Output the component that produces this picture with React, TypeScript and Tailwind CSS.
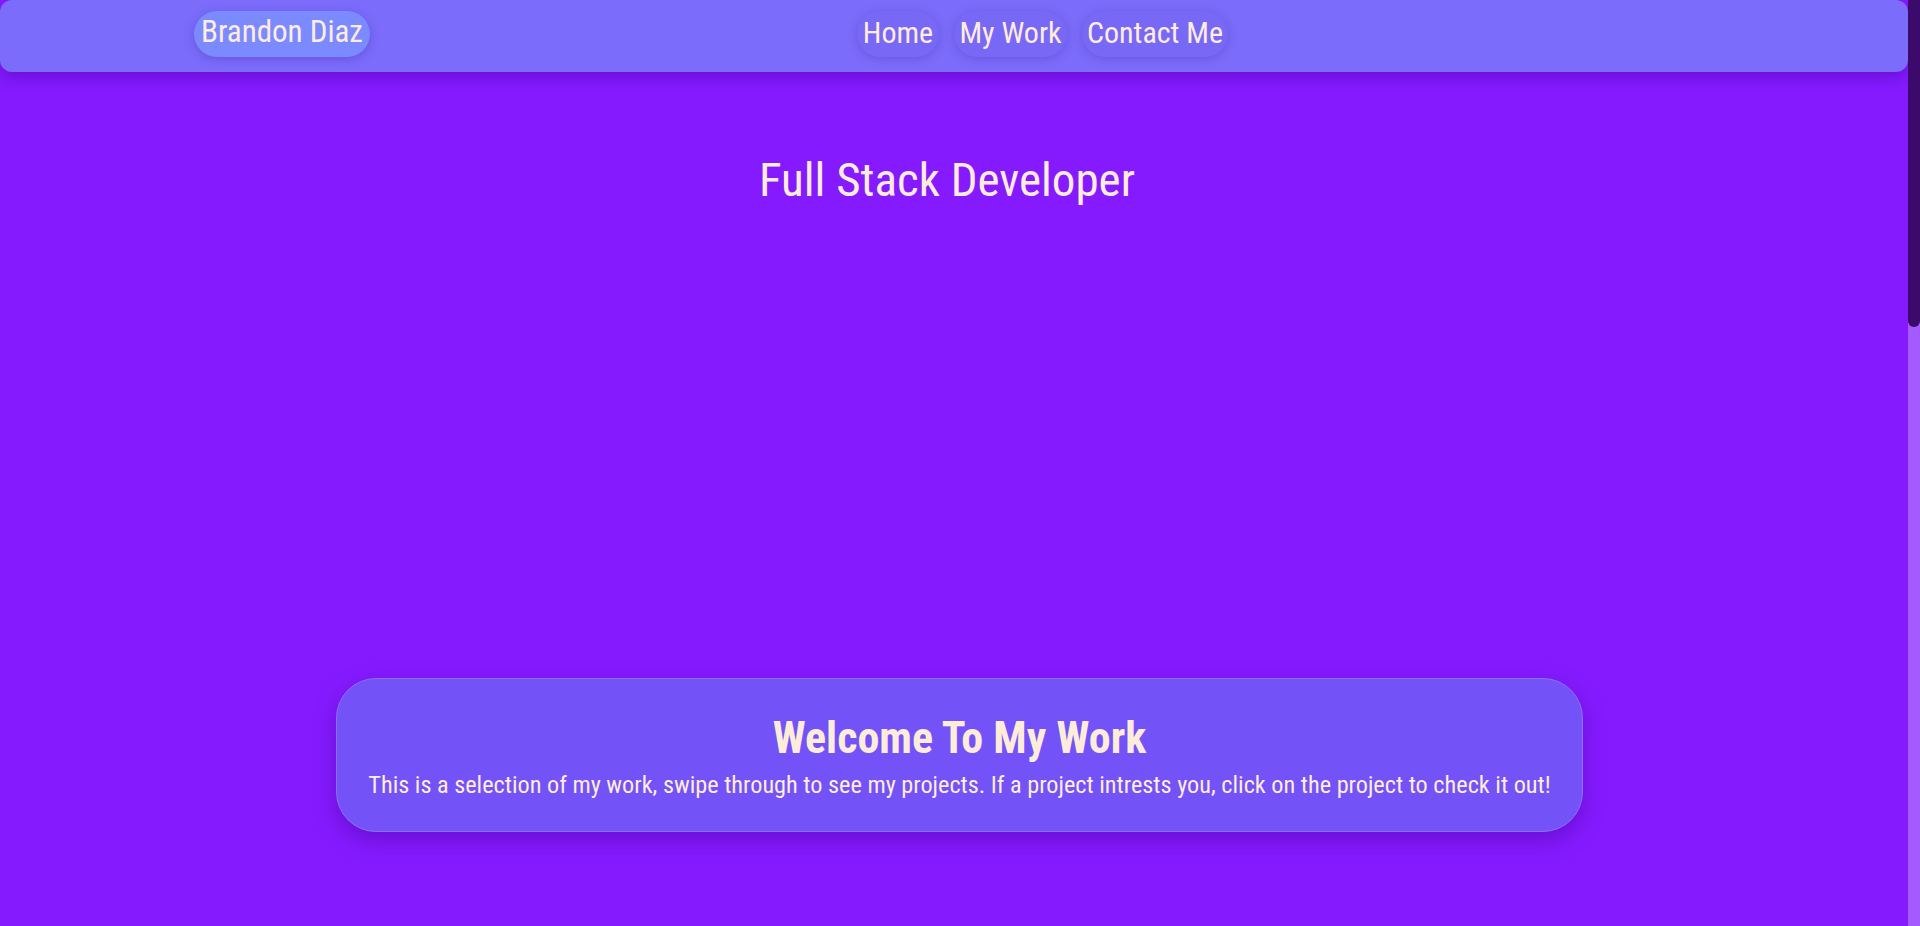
const font = { fontFamily: 'Roboto, "Open Sans", sans-serif', fontStretch: "condensed" };

export default function App() {
  const links = [
    { label: "Home", w: "w-[82px]" },
    { label: "My Work", w: "w-[113px]" },
    { label: "Contact Me", w: "w-[146px]" },
  ];

  return (
    <div style={font} className="h-screen overflow-hidden flex bg-[#851aff] text-[#fdecda]">
      <main className="flex-1 min-w-0">
        {/* Navbar */}
        <nav className="h-[72px] rounded-xl bg-[#7b6cfb] shadow-[0_6px_14px_rgba(60,0,140,0.35)] flex items-start pt-[11px] pl-[194px]">
          <a className="w-[176px] h-[46px] pb-[3px] rounded-full bg-[#7b8bff] shadow-[0_2px_10px_rgba(70,40,170,0.35)] flex items-center justify-center text-[31px] whitespace-nowrap">
            Brandon Diaz
          </a>

          <div className="ml-[487px] flex gap-[15px]">
            {links.map((l) => (
              <a
                key={l.label}
                className={`${l.w} h-[46px] pb-[3px] rounded-full bg-[#7868f6] shadow-[0_2px_10px_rgba(70,40,170,0.3)] flex items-center justify-center text-[30px] whitespace-nowrap`}
              >
                {l.label}
              </a>
            ))}
          </div>
        </nav>

        {/* Hero */}
        <h1 className="mt-[84px] pr-[14px] text-center text-[47px] leading-none">
          Full Stack Developer
        </h1>

        {/* Intro card */}
        <div className="mt-[475px] ml-[336px] w-[1247px] h-[154px] rounded-[40px] bg-[#7353f7] border border-[#8c70fa] shadow-[0_8px_22px_rgba(70,0,150,0.45)] flex flex-col items-center pt-[37px]">
          <h2 className="text-[44px] font-bold leading-none">
            Welcome To My Work
          </h2>
          <p className="mt-[11px] text-[24.25px] leading-[1.2] whitespace-nowrap">
            This is a selection of my work, swipe through to see my projects. If a project intrests you, click on the project to check it out!
          </p>
        </div>
      </main>

      {/* scrollbar */}
      <div className="w-3 shrink-0 bg-[#a35bff]">
        <div className="h-[327px] bg-[#3c0a6b] rounded-b-lg" />
      </div>
    </div>
  );
}
